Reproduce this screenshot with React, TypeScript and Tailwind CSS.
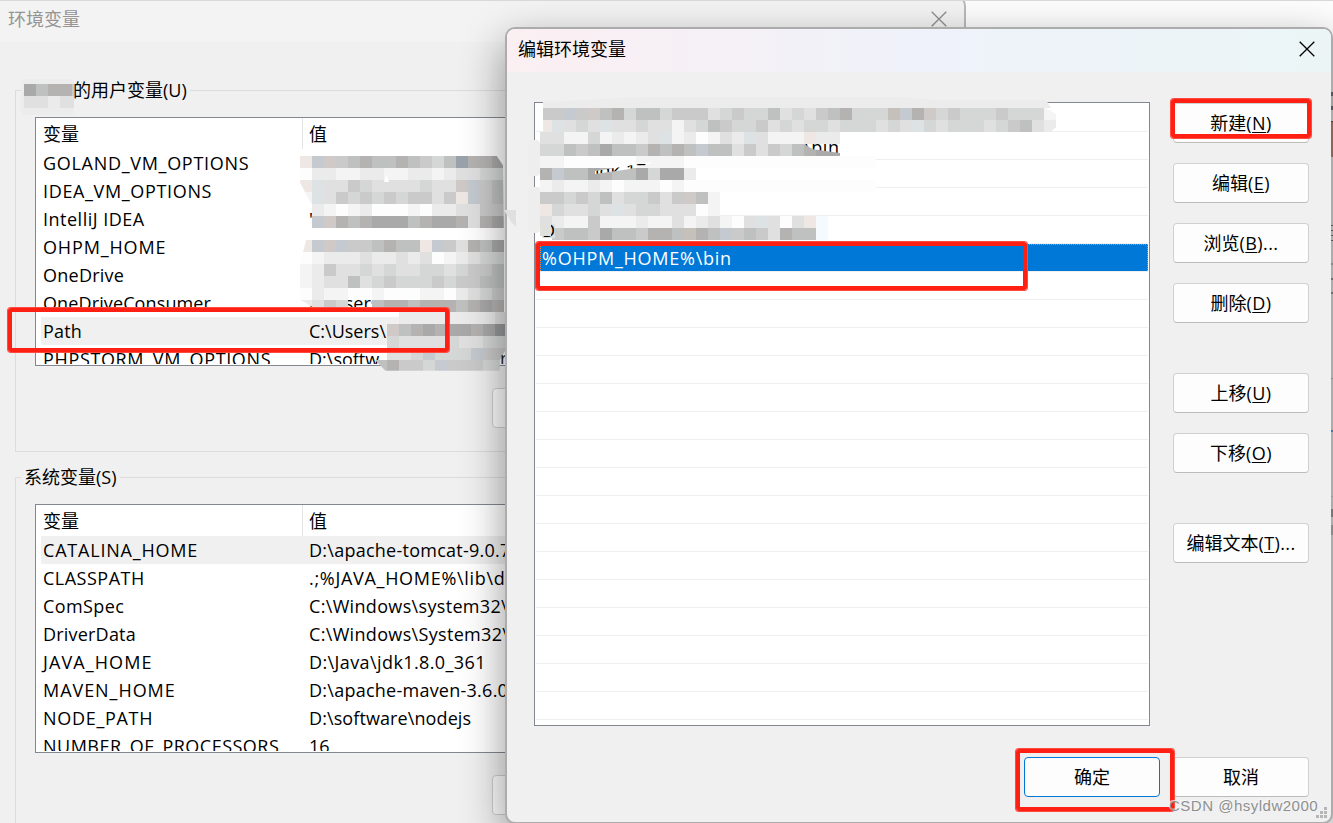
import type { ReactNode } from 'react'

type Variable = { name: string; value: string; tracking?: string; valueTracking?: string; selected?: boolean }

const userVariables: Variable[] = [
    { name: 'GOLAND_VM_OPTIONS', value: '', tracking: 'tracking-[0.7px]' },
    { name: 'IDEA_VM_OPTIONS', value: '', tracking: 'tracking-[0.65px]' },
    { name: 'IntelliJ IDEA', value: '"', tracking: 'tracking-[0.5px]' },
    { name: 'OHPM_HOME', value: '', tracking: 'tracking-[0.85px]' },
    { name: 'OneDrive', value: '', tracking: 'tracking-[0.25px]' },
    { name: 'OneDriveConsumer', value: 'C:\\Users\\', tracking: 'tracking-[0.12px]' },
    { name: 'Path', value: 'C:\\Users\\', tracking: 'tracking-[0.2px]', selected: true },
    { name: 'PHPSTORM_VM_OPTIONS', value: 'D:\\softw', tracking: 'tracking-[0.65px]' },
]

const systemVariables: Variable[] = [
    { name: 'CATALINA_HOME', value: 'D:\\apache-tomcat-9.0.74', tracking: 'tracking-[0.8px]', valueTracking: 'tracking-[0.25px]', selected: true },
    { name: 'CLASSPATH', value: '.;%JAVA_HOME%\\lib\\dt.jar', tracking: 'tracking-[0.5px]', valueTracking: 'tracking-[0.7px]' },
    { name: 'ComSpec', value: 'C:\\Windows\\system32\\cmd.exe', tracking: 'tracking-[0.4px]', valueTracking: 'tracking-[0.33px]' },
    { name: 'DriverData', value: 'C:\\Windows\\System32\\Drivers', tracking: 'tracking-[0.2px]', valueTracking: 'tracking-[0.33px]' },
    { name: 'JAVA_HOME', value: 'D:\\Java\\jdk1.8.0_361', tracking: 'tracking-[1.1px]', valueTracking: 'tracking-[0.4px]' },
    { name: 'MAVEN_HOME', value: 'D:\\apache-maven-3.6.0', tracking: 'tracking-[0.95px]', valueTracking: 'tracking-[0.25px]' },
    { name: 'NODE_PATH', value: 'D:\\software\\nodejs', tracking: 'tracking-[0.7px]', valueTracking: 'tracking-[0.1px]' },
    { name: 'NUMBER_OF_PROCESSORS', value: '16', tracking: 'tracking-[0.48px]' },
]

// one letter per 12px censor block
const shades: Record<string, string> = {
    '.': '',
    '0': 'bg-[#fdfdfd]',
    '1': 'bg-[#f4f4f4]',
    '2': 'bg-[#ebebec]',
    '3': 'bg-[#e0e0e0]',
    '4': 'bg-[#d5d6d6]',
    '5': 'bg-[#cacaca]',
    '6': 'bg-[#bfc0c0]',
    '7': 'bg-[#b5b3b2]',
    '8': 'bg-[#a9a9a9]',
    '9': 'bg-[#979899]',
    b: 'bg-[#c5cad0]',
    d: 'bg-[#9aa2ab]',
    g: 'bg-[#dde2e5]',
    l: 'bg-[#f5faff]',
    n: 'bg-[#c5c1ba]',
    p: 'bg-[#eee7e3]',
    w: 'bg-[#cfc9c7]',
}

const userMosaic = [
    'pbw5676676546d778',
    '02211221122123344',
    'pg33543333433wb56',
    '1g35454545535pb56',
    '.2101200010223355',
    '.bw76788867887378',
    '.................',
    'pbwb556766pb53768',
    '01222322323012344',
    '12533434334434556',
    '12336345444545566',
    '02110010001102345',
    '2354..67767776787',
]

const pathMosaic = [
    '..222222223',
    '.w678788789',
    '.4333343344',
    '.334b444b55',
    '67554b55544',
]

const listMosaicTop = [
    '55b5w674664555345446343567444nb7w4544454441',
    'pg343g3343313465445343443444343g43444345632',
]

const listMosaicSecond = [
    '3311412123g120132g3111p22',
    '4465686657676b66353546788',
]

const listMosaicThird = [
    '1100000011110000000000000000',
    '7b66876684882',
    '1211210111010000000000000000',
    '554546344535w61',
    'p43343g34433301',
    '321151112113123103g303pl',
    '.56658665776n76b5653766l',
]

function Mosaic({ rows, className }: { rows: string[]; className: string }) {
    return (
        <div className={`absolute overflow-hidden ${className}`}>
            {rows.map((row, y) => (
                <div key={y} className="flex h-3">
                    {row.split('').map((c, x) => (
                        <span key={x} className={`h-3 w-3 shrink-0 ${shades[c]}`} />
                    ))}
                </div>
            ))}
        </div>
    )
}

function VariableTable({ rows }: { rows: Variable[] }) {
    return (
        <div className="h-[249px] w-[900px] overflow-hidden border border-[#828790] bg-white pb-px">
            <div className="flex h-[31px] items-center">
                <span className="w-[266px] pl-[7px]">变量</span>
                <span className="flex h-full flex-1 items-center border-l border-[#e5e5e5] pl-1.5">值</span>
            </div>
            <div className="h-[215px] overflow-hidden">
                {rows.map((row) => (
                    <div key={row.name} className={`ml-[5px] flex h-7 items-center whitespace-pre leading-7 ${row.selected ? 'bg-[#f0f0f0]' : ''}`}>
                        <span className={`w-[266px] pl-0.5 ${row.tracking ?? ''}`}>{row.name}</span>
                        <span className={`pl-0.5 ${row.valueTracking ?? ''}`}>{row.value}</span>
                    </div>
                ))}
            </div>
        </div>
    )
}

function Group({ title, children, className }: { title: ReactNode; children: ReactNode; className: string }) {
    return (
        <div className={`ml-[15px] w-[940px] border border-[#dcdcdc] ${className}`}>
            <div className="-mt-[15px] ml-[5px] flex h-7 w-fit items-center bg-[#f0f0f0] px-[3px] pb-px">{title}</div>
            <div className="ml-[19px] mt-[13px]">{children}</div>
            <div className="ml-[476px] mt-[22px] h-10 w-[136px] rounded border border-[#cfcfcf] bg-[#fdfdfd]" />
        </div>
    )
}

function Button({ label, mnemonic, tail = '', className = 'border-[#d0d0d0] border-b-[#bcbcbc]' }: { label: string; mnemonic?: string; tail?: string; className?: string }) {
    return (
        <button className={`flex h-10 w-[136px] shrink-0 items-center justify-center rounded border bg-[#fdfdfd] ${className}`}>
            <span>
                {label}
                {mnemonic && <span className="tracking-[0.4px]">(<span className="underline decoration-1 underline-offset-2">{mnemonic}</span>){tail}</span>}
            </span>
        </button>
    )
}

function Cross({ className }: { className: string }) {
    return (
        <svg viewBox="0 0 16 16" className={`h-4 w-4 ${className}`} fill="none" stroke="currentColor" strokeWidth="1.3">
            <path d="M0.7 0.7 15.3 15.3M15.3 0.7 0.7 15.3" />
        </svg>
    )
}

function Marker({ className }: { className: string }) {
    return <div className={`absolute rounded-[3px] border-[4px] border-[#ff2013] shadow-[0_0_0_1px_#ff4a40] ${className}`} />
}

function VariablesWindow() {
    return (
        <div className="absolute -left-4 -top-1 h-[840px] w-[982px] overflow-hidden rounded-tr-[10px] border-2 border-[#b9b9b9] bg-[#f0f0f0] pl-3.5 pt-0.5">
            <div className="flex h-[42px] items-center justify-between bg-[#f3f3f3] pb-[5px] pl-2 pr-[17px] text-[#949494]">
                <span>环境变量</span>
                <Cross className="text-[#8c8c8c]" />
            </div>
            <Group className="mt-12 h-[362px]" title={<><span className="w-[49px]" />的用户变量(U)</>}>
                <VariableTable rows={userVariables} />
            </Group>
            <Group className="mt-[25px] h-[362px]" title="系统变量(S)">
                <VariableTable rows={systemVariables} />
            </Group>
        </div>
    )
}

function EditDialog() {
    return (
        <div className="absolute left-[505px] top-[27px] flex h-[797px] w-[828px] flex-col overflow-hidden rounded-[10px] border-2 border-[#acacac] bg-[#f0f0f0] shadow-[0_16px_44px_rgba(0,0,0,0.42)]">
            <div className="flex h-[43px] shrink-0 items-center justify-between bg-linear-to-r from-[#fbeff2] via-[#eff2fa] to-[#ebf5f6] pb-[3px] pl-[11px] pr-4">
                <span>编辑环境变量</span>
                <Cross className="text-black" />
            </div>
            <div className="flex pl-[27px] pt-[30px]">
                <div className="h-[624px] w-[616px] border border-[#828790] bg-white px-px pt-px">
                    {Array.from({ length: 22 }, (_, i) => (
                        <div key={i} className="h-7 border-b border-[#efefef]">
                            {i === 5 && <div className="ml-1 h-[27px] border border-dotted border-[#e98b43] border-b-0 bg-[#0078d7] pl-px leading-[26px] tracking-[0.75px] text-white">%OHPM_HOME%\bin</div>}
                        </div>
                    ))}
                </div>
                <div className="ml-[23px] mt-px flex flex-col gap-5">
                    <Button label="新建" mnemonic="N" />
                    <Button label="编辑" mnemonic="E" />
                    <Button label="浏览" mnemonic="B" tail="..." />
                    <Button label="删除" mnemonic="D" />
                    <div className="mt-[30px] flex flex-col gap-5">
                        <Button label="上移" mnemonic="U" />
                        <Button label="下移" mnemonic="O" />
                    </div>
                    <div className="mt-[30px]">
                        <Button label="编辑文本" mnemonic="T" tail="..." />
                    </div>
                </div>
            </div>
            <div className="mt-[31px] flex justify-end gap-[13px] pr-[22px]">
                <Button label="确定" className="border-[#0078d7]" />
                <Button label="取消" />
            </div>
            <svg className="absolute bottom-[3px] right-[3px] h-3 w-3" fill="#b6b6b6">
                <path d="M8 0h3v3h-3zM4 4h3v3h-3zM8 4h3v3h-3zM0 8h3v3h-3zM4 8h3v3h-3zM8 8h3v3h-3z" />
            </svg>
        </div>
    )
}

// slice of the desktop that shows past the dialog's right edge
function DesktopEdge() {
    return (
        <div className="absolute right-0 top-[73px] flex h-[740px] w-0.5 flex-col bg-[#acacac]">
            <div className="mt-[19px] h-[18px] w-full border-y-4 border-[#55565c] bg-[#a0a0a0]" />
            <div className="mt-[11px] h-9 w-full border-t border-[#444444] bg-[#8d6455]" />
            <div className="mt-[68px] h-[17px] w-full bg-[repeating-linear-gradient(#555_0_1px,#acacac_1px_5px)]" />
            <div className="mt-[21px] h-0.5 w-full bg-[#888888]" />
            <div className="mt-[13px] h-4 w-full border-y-2 border-[#6d6d6d]" />
            <div className="mt-[84px] h-px w-full bg-[#888888]" />
            <div className="mt-[51px] h-0.5 w-full bg-[#3878ad]" />
            <div className="mt-16 h-px w-full bg-[#999999]" />
            <div className="mt-3 h-2 w-full bg-[#777777]" />
            <div className="mt-2 h-2.5 w-full bg-[#8a8a8a]" />
        </div>
    )
}

function App() {
    return (
        <div className="relative h-[823px] w-[1333px] overflow-hidden border-t border-[#d8d8d8] bg-[#fdfdfd] font-['Open_Sans','Noto_Sans_CJK_SC',sans-serif] text-[18px] leading-7 text-black">
            <div className="absolute inset-x-0 -top-px bottom-0">
                <VariablesWindow />
                <div className="absolute left-[21px] top-[79px] h-9 w-[53px] rounded bg-[#ececec]" />
                <Mosaic rows={['8677b', '33233']} className="left-6 top-[84px] w-[50px]" />
                <Mosaic rows={userMosaic} className="left-[300px] top-[156px] w-[205px] [clip-path:polygon(0_0,96%_0,99%_6%,100%_100%,10%_100%,0_92%,0_69%,3%_54%,3%_46%,4.5%_46%,6%_32%,0_17%)]" />
                <Mosaic rows={pathMosaic} className="left-[375px] top-[312px] w-[130px] [clip-path:polygon(0_0,100%_0,100%_65%,96%_80%,96%_98%,8%_98%,0_80%,9%_78%,9%_20%)]" />
                <div className="absolute left-[500px] top-[344px] h-[20px] w-[5px] overflow-hidden text-[#222222]">r</div>
                <div className="absolute left-[384px] top-[174px] h-2 w-[5px] bg-white [clip-path:polygon(50%_0,100%_100%,0_100%)]" />
                <EditDialog />
                <DesktopEdge />
                <div className="absolute left-[504px] top-[210px] h-[17px] w-3 bg-[#e0e0e0] [clip-path:polygon(0_0,100%_0,100%_100%,60%_70%)]" />
                <div className="absolute left-[543px] top-[97px] h-[11px] w-[508px] bg-[#ececec] [clip-path:polygon(0_45%,20%_0,70%_0,77%_25%,99%_25%,100%_100%,0_100%)]" />
                <Mosaic rows={listMosaicTop} className="left-[540px] top-[108px] w-[516px] [clip-path:polygon(3px_0,98%_0,100%_25%,100%_80%,99%_100%,3px_100%)]" />
                <div className="absolute left-[804px] top-[134px] h-[20px] overflow-hidden leading-[26px] tracking-[0.6px]">\bin</div>
                <Mosaic rows={listMosaicSecond} className="left-[540px] top-[132px] w-[300px] [clip-path:polygon(0_0,100%_0,100%_50%,88%_50%,91%_72%,100%_88%,100%_100%,0_100%)]" />
                <Mosaic rows={listMosaicThird} className="left-[540px] top-[156px] w-[345px]" />
                <div className="absolute left-[595px] top-[162px] h-3 w-[56px] overflow-hidden bg-white leading-[17px] [clip-path:polygon(0_75%,50%_40%,100%_0,100%_12%,60%_60%,0_100%)]">jdk-17</div>
                <div className="absolute left-[528px] top-[140px] h-9 w-3 rounded bg-[#eeeeee]" />
                <div className="absolute left-[528px] top-[187px] h-[46px] w-3 rounded bg-[#eeeeee]" />
                <div className="absolute left-[542px] top-[224px] h-[14px] w-[13px] overflow-hidden bg-[#e0e0dc] leading-[13px]">D</div>
                <div className="absolute left-[540px] top-[224px] h-[12px] w-[11px] bg-[#e0e0dc]" />
                <Marker className="left-[8px] top-[308px] h-[44px] w-[441px]" />
                <Marker className="left-[536px] top-[242px] h-[48px] w-[491px]" />
                <Marker className="left-[1171px] top-[99px] h-[39px] w-[140px]" />
                <Marker className="left-[1016px] top-[749px] h-[62px] w-[158px]" />
                <span className="absolute left-[1169px] top-[794px] whitespace-nowrap font-['Liberation_Sans',sans-serif] text-[15px] leading-6 tracking-[0.5px] text-[#8f8f8f] [text-shadow:-1px_-1px_0_#ffffffb0]">CSDN @hsyldw2000</span>
            </div>
        </div>
    )
}

export default App
